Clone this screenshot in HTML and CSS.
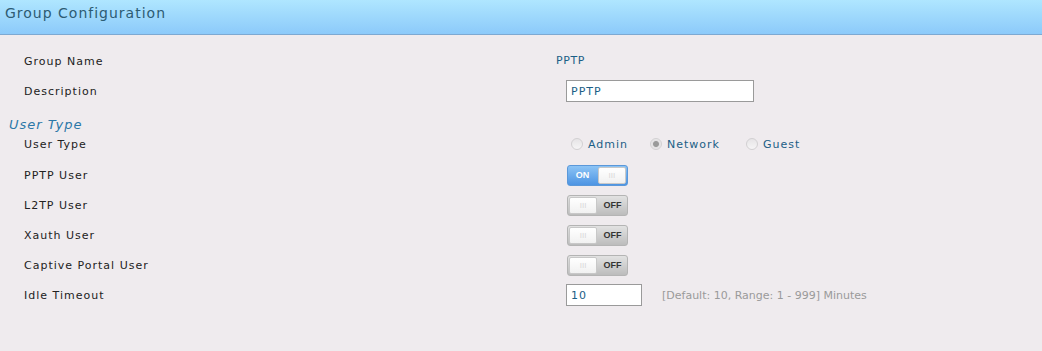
FILE: index.html
```html
<!DOCTYPE html>
<html lang="en">

<head>
    <meta charset="UTF-8">
    <title>Group Configuration</title>
    <link rel="stylesheet" href="styles.css">
</head>

<body>
    <div class="panel-head">Group Configuration</div>
    <div class="panel-body">
        <div class="row">
            <div class="label">Group Name</div>
            <div class="value text-value">PPTP</div>
        </div>
        <div class="row">
            <div class="label">Description</div>
            <div class="value"><input class="field field-wide" type="text" value="PPTP"></div>
        </div>
        <div class="section-title">User Type</div>
        <div class="row row-first">
            <div class="label">User Type</div>
            <div class="value radios">
                <span class="radio"><span class="dot"></span>Admin</span>
                <span class="radio radio-wide"><span class="dot checked"></span>Network</span>
                <span class="radio"><span class="dot"></span>Guest</span>
            </div>
        </div>
        <div class="row">
            <div class="label">PPTP User</div>
            <div class="value">
                <div class="toggle on"><span class="side">ON</span><span class="knob">III</span></div>
            </div>
        </div>
        <div class="row">
            <div class="label">L2TP User</div>
            <div class="value">
                <div class="toggle off"><span class="knob">III</span><span class="side">OFF</span></div>
            </div>
        </div>
        <div class="row">
            <div class="label">Xauth User</div>
            <div class="value">
                <div class="toggle off"><span class="knob">III</span><span class="side">OFF</span></div>
            </div>
        </div>
        <div class="row">
            <div class="label">Captive Portal User</div>
            <div class="value">
                <div class="toggle off"><span class="knob">III</span><span class="side">OFF</span></div>
            </div>
        </div>
        <div class="row">
            <div class="label">Idle Timeout</div>
            <div class="value">
                <input class="field field-short" type="text" value="10">
                <span class="hint">[Default: 10, Range: 1 - 999] Minutes</span>
            </div>
        </div>
    </div>
</body>

</html>
```

FILE: styles.css
```css
* {
    box-sizing: border-box;
}

body {
    margin: 0;
    background: #efebee;
    font-family: "DejaVu Sans", Verdana, sans-serif;
    font-size: 11px;
    color: #222;
}

.panel-head {
    height: 35px;
    padding: 5px 0 0 5px;
    background: linear-gradient(to bottom, #afe6ff, #8ccafa);
    border-bottom: 1px solid #7da9d2;
    color: #2d5b73;
    font-size: 14px;
    letter-spacing: 1px;
}

.panel-body {
    padding-top: 11px;
}

.row {
    display: flex;
    align-items: center;
    height: 30px;
}

.row-first {
    height: 26px;
    margin-bottom: 3px;
}

.label {
    width: 546px;
    padding-left: 24px;
    letter-spacing: 1px;
}

.value {
    display: flex;
    align-items: center;
    padding-left: 20px;
}

.text-value {
    padding-left: 10px;
    margin-top: -2px;
    color: #1b5e86;
    letter-spacing: 0.6px;
}

.section-title {
    padding: 11px 0 0 9px;
    height: 25px;
    color: #2b78a8;
    font-style: italic;
    font-size: 13px;
    letter-spacing: 1px;
}

.field {
    height: 22px;
    border: 1px solid #9a9a9a;
    background: #fff;
    padding: 0 4px;
    font-family: inherit;
    font-size: 11px;
    color: #1b5e86;
    letter-spacing: 1px;
}

.field-wide {
    width: 188px;
}

.field-short {
    width: 76px;
}

.hint {
    margin-left: 20px;
    color: #9a9a9a;
    font-size: 11px;
}

.radios {
    padding-left: 25px;
}

.radio {
    display: flex;
    align-items: center;
    margin-right: 22px;
    color: #1b5e86;
    letter-spacing: 1px;
}

.radio-wide {
    margin-right: 26px;
}

.dot {
    width: 12px;
    height: 12px;
    margin-right: 5px;
    border-radius: 50%;
    border: 1px solid #d2d0d2;
    background: linear-gradient(to bottom, #e6e4e6, #f6f5f6);
}

.dot.checked {
    background: radial-gradient(circle, #9a9a9a 0, #9a9a9a 2.5px, #e2e0e2 3.5px, #f4f3f4 100%);
}

.toggle {
    display: flex;
    width: 61px;
    height: 21px;
    margin-left: 1px;
    border-radius: 3px;
    overflow: hidden;
    font-family: "Liberation Sans", Arial, sans-serif;
    font-weight: bold;
    font-size: 9px;
}

.toggle .side {
    width: 31px;
    display: flex;
    align-items: center;
    justify-content: center;
}

.toggle .knob {
    width: 30px;
    display: flex;
    align-items: center;
    justify-content: center;
    margin: 1px;
    background: linear-gradient(to bottom, #ffffff, #f1f1f1);
    border: 1px solid #c8c8c8;
    border-radius: 2px;
    color: #d8d8d8;
    font-weight: normal;
    font-size: 8px;
}

.toggle.on {
    border: 1px solid #5b98d9;
    background: linear-gradient(to bottom, #8cc4f5, #4d94e3);
}

.toggle.on .side {
    color: #fff;
}

.toggle.off {
    border: 1px solid #b4b4b4;
    background: linear-gradient(to bottom, #e2e2e2, #bcbcbc);
}

.toggle.off .side {
    color: #333;
}
```
